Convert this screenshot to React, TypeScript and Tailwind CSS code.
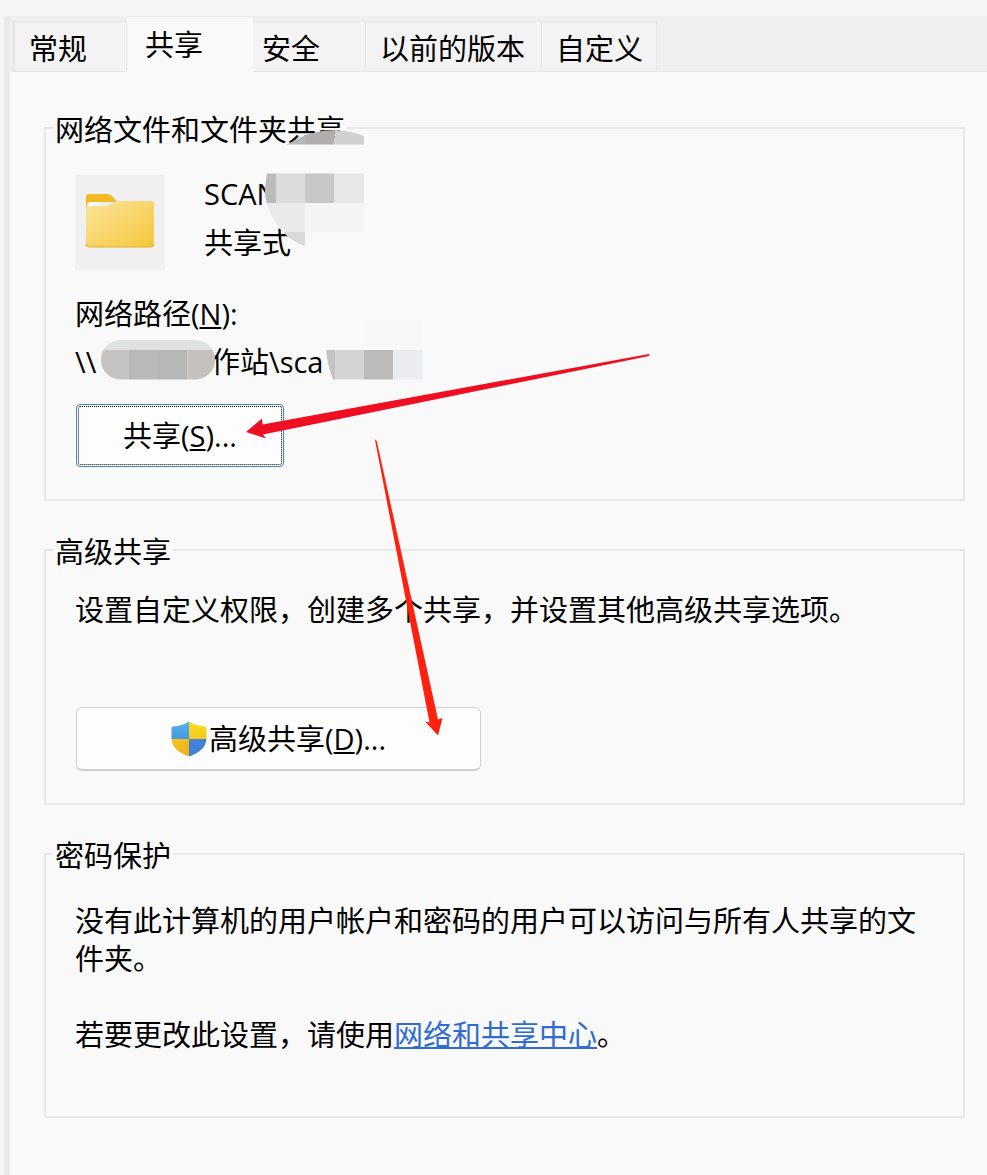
import type { ReactNode } from "react";

const tabs = [
  { label: "常规", className: "w-[114px] pl-[14px] border-l-2" },
  { label: "共享", className: "w-[126px] pl-[18px]", active: true },
  { label: "安全", className: "w-[113px] pl-[9px]" },
  { label: "以前的版本", className: "w-[176px] pl-[14px]" },
  { label: "自定义", className: "w-[115px] pl-[14px]" },
];

function Group({ title, className, children }: { title: string; className: string; children: ReactNode }) {
  return (
    <fieldset className={`min-w-0 border-2 border-[#e8e8e8] px-[29px] ${className}`}>
      <legend className="-ml-[22px] h-11 px-0.5 pt-1 leading-10">{title}</legend>
      {children}
    </fieldset>
  );
}

function FolderIcon() {
  return (
    <svg viewBox="0 0 90 95" className="h-[95px] w-[90px] shrink-0 bg-[#f0f0f0]" aria-hidden="true">
      <defs>
        <linearGradient id="folder" x1="0" y1="0" x2="1" y2="1">
          <stop offset="0" stopColor="#fbe49c" />
          <stop offset="1" stopColor="#f6c63a" />
        </linearGradient>
        <linearGradient id="paper" x1="0" y1="0" x2="1" y2="0">
          <stop offset="0" stopColor="#ffffff" />
          <stop offset="1" stopColor="#e6e2d4" />
        </linearGradient>
      </defs>
      <path d="M11 22q0-3 3-3h18q3 0 5 2l5 6v14H11z" fill="#f2b925" />
      <path d="M12 31q0-4 4-4h26l-3 3q-2 2-5 2H16q-4 0-4 2z" fill="url(#paper)" />
      <path d="M11 34q0-3 3-3h18q3 0 5-2l2-1q2-2 4-2h33q3 0 3 3v40q0 3-3 3H14q-3 0-3-3z" fill="url(#folder)" />
      <path d="M11 69q0 3 3 3h62q3 0 3-3" fill="none" stroke="#e3ae2f" />
    </svg>
  );
}

function ShieldIcon() {
  return (
    <svg viewBox="0 0 36 36" className="size-9 shrink-0" aria-hidden="true">
      <defs>
        <linearGradient id="blueTop" x1="0" y1="0" x2="0" y2="1">
          <stop offset="0" stopColor="#55b2ec" />
          <stop offset="1" stopColor="#4398de" />
        </linearGradient>
        <linearGradient id="yellowTop" x1="0" y1="0" x2="0" y2="1">
          <stop offset="0" stopColor="#f9dd18" />
          <stop offset="1" stopColor="#f7c920" />
        </linearGradient>
        <linearGradient id="yellowBottom" x1="0" y1="0" x2="1" y2="1">
          <stop offset="0" stopColor="#f8c522" />
          <stop offset="1" stopColor="#eeb01b" />
        </linearGradient>
      </defs>
      <path d="M18 0.500Q11 5 2 5.500Q0.500 5.500 0.500 7V18H18z" fill="url(#blueTop)" />
      <path d="M18 0.500Q25 5 34 5.500Q35.500 5.500 35.500 7V18H18z" fill="url(#yellowTop)" />
      <path d="M0.500 18Q1.500 30 18 35.500V18z" fill="url(#yellowBottom)" />
      <path d="M35.500 18Q34.500 30 18 35.500V18z" fill="#3f82d8" />
    </svg>
  );
}

function Annotations() {
  return (
    <svg className="pointer-events-none absolute left-0 top-0" width="987" height="1175" aria-hidden="true">
      <defs>
        <clipPath id="cap">
          <path d="M287 144.500Q310 130 335 130Q352 131 364 136V144.500z" />
        </clipPath>
        <clipPath id="name">
          <path d="M267 173H364V246H305Q292 242 281 230Q264 208 265 188z" />
        </clipPath>
        <clipPath id="host">
          <rect x="101" y="340" width="114" height="39.500" rx="19.500" />
        </clipPath>
      </defs>
      <g clipPath="url(#cap)">
        <rect x="287" y="130" width="19" height="15" fill="#b5b6b7" />
        <rect x="306" y="130" width="28.500" height="15" fill="#b0aeac" />
        <rect x="334.500" y="130" width="30" height="15" fill="#cfd0d1" />
      </g>
      <g clipPath="url(#name)">
        <rect x="264" y="173.500" width="12" height="30" fill="#babcbc" />
        <rect x="276" y="173.500" width="29" height="30" fill="#dcdcdc" />
        <rect x="305" y="173.500" width="29.500" height="30" fill="#c7c7c7" />
        <rect x="334.500" y="173.500" width="29.500" height="30" fill="#e7e7e7" />
        <rect x="264" y="203" width="41" height="29.500" fill="#e9eaea" />
        <rect x="305" y="203" width="59" height="29.500" fill="#f3f5f4" />
        <rect x="264" y="232" width="41" height="14" fill="#d8dada" />
      </g>
      <g clipPath="url(#host)">
        <rect x="101" y="340" width="114" height="11" fill="#e0e1e1" />
        <rect x="101" y="350" width="28" height="30" fill="#c6c4c2" />
        <rect x="129" y="350" width="29" height="30" fill="#b9b9b9" />
        <rect x="158" y="350" width="29.500" height="30" fill="#b6b7b7" />
        <rect x="187.500" y="350" width="28" height="30" fill="#c5c1be" />
      </g>
      <rect x="364" y="321" width="58" height="29" fill="#f8f8f8" />
      <path d="M326 350h9v29.500h-2q-5-12-7-29.500z" fill="#c3c3c2" />
      <rect x="335" y="350" width="29" height="29.500" fill="#d5d4d3" />
      <rect x="364" y="350" width="29" height="29.500" fill="#bdbbb9" />
      <rect x="393" y="350" width="29.500" height="29.500" fill="#ebecf0" />
      <path d="M649 354Q650 355 649 356L263 434.500L266 438.500L246 432L262 418.500L262.500 424.500z" fill="#ee0f22" />
      <path d="M375 440Q376 439 377 442L438 719.500L442.500 718L438 735.500L425 721.500L429.500 722.500z" fill="#ff2110" />
    </svg>
  );
}

export default function App() {
  return (
    <div className="relative min-h-[1175px] overflow-hidden bg-[#f5f5f5] pl-1 pt-4 font-['Open_Sans','Noto_Sans_CJK_SC',sans-serif] text-[29px] leading-[38px] text-black">
      <div className="flex min-h-[1159px] flex-col rounded-tl bg-[#efefef]">
        <div role="tablist" className="flex h-14 items-end rounded-tl border-l-[5px] border-[#e8e8e8] pl-1">
          {tabs.map((tab) => (
            <button
              key={tab.label}
              type="button"
              role="tab"
              aria-selected={Boolean(tab.active)}
              className={`shrink-0 whitespace-nowrap text-left ${tab.className} ${
                tab.active
                  ? "h-14 border-t border-[#e8e8e8] bg-[#f9f9f9]"
                  : "h-[51px] border-b border-r border-t border-[#e6e6e6] bg-[#f3f3f3] pt-1"
              }`}
            >
              {tab.label}
            </button>
          ))}
          <div className="h-full grow border-b border-[#e6e6e6]" />
        </div>
        <main className="flex grow border-l-[5px] border-[#e8e8e8]">
          <div className="flex grow flex-col gap-[27px] border-l border-[#ececec] bg-[#f9f9f9] pl-[34px] pr-[22px] pt-[34px]">
            <Group title="网络文件和文件夹共享" className="pb-8">
              <div className="flex gap-[39px] pt-[25px]">
                <FolderIcon />
                <div className="flex flex-col gap-[11px]">
                  <p>SCAN</p>
                  <p>共享式</p>
                </div>
              </div>
              <p className="pt-[25px]">
                网络路径(<u>N</u>):
              </p>
              <p className="flex pt-[10px]">
                <span className="w-[136px]">\\</span>
                <span>作站\sca</span>
              </p>
              <button
                type="button"
                className="ml-px mt-[23px] block h-[63px] w-[208px] rounded border border-[#3f86d2] bg-[#fdfdfd] outline-1 -outline-offset-3 outline-dotted outline-black"
              >
                共享(<u>S</u>)...
              </button>
            </Group>

            <Group title="高级共享" className="pb-8">
              <p className="pt-[19px]">设置自定义权限，创建多个共享，并设置其他高级共享选项。</p>
              <button
                type="button"
                className="ml-px mt-[78px] flex h-16 w-[405px] items-center justify-center gap-0.5 rounded-md border border-b-2 border-[#d0d0d0] bg-[#fdfdfd]"
              >
                <ShieldIcon />
                <span>
                  高级共享(<u>D</u>)...
                </span>
              </button>
            </Group>

            <Group title="密码保护" className="pb-[62px]">
              <p className="pt-[26px]">没有此计算机的用户帐户和密码的用户可以访问与所有人共享的文件夹。</p>
              <p className="pt-[38px]">
                若要更改此设置，请使用
                <a href="#network-center" className="text-[#2f6bd0] underline decoration-2">
                  网络和共享中心
                </a>
                。
              </p>
            </Group>
          </div>
        </main>
      </div>
      <Annotations />
    </div>
  );
}
